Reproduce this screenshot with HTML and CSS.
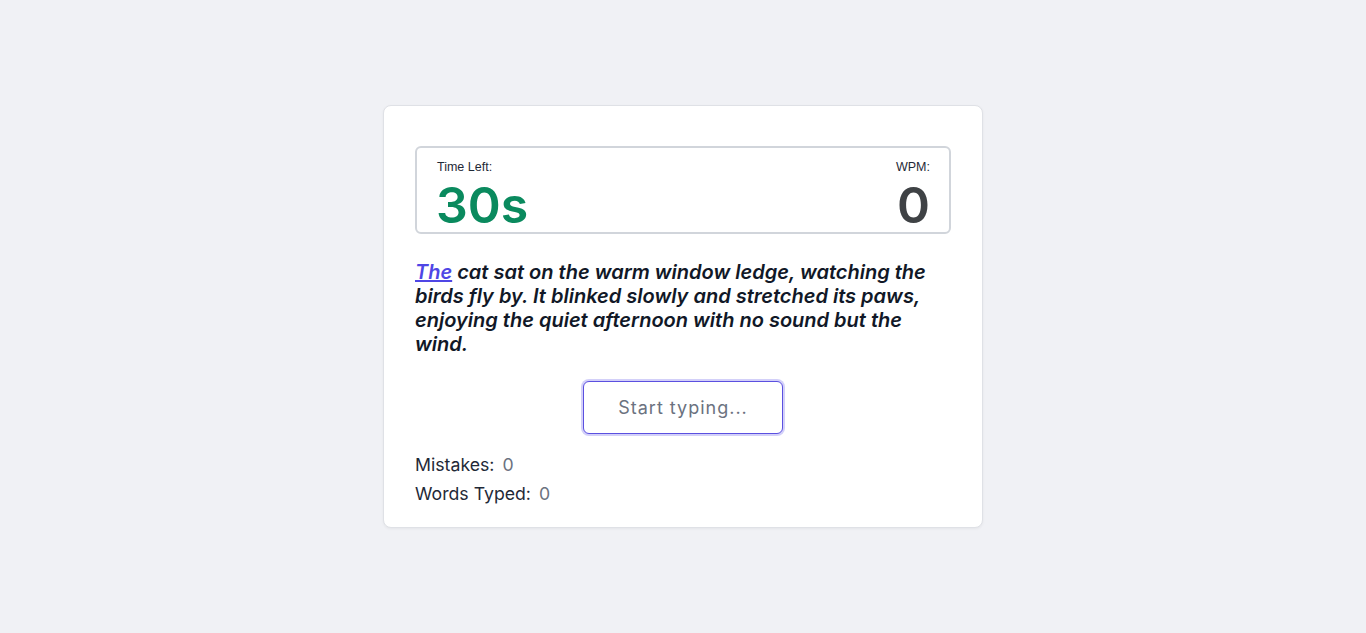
FILE: index.html
```html
<!DOCTYPE html>
<html>
<head>
<meta charset="utf-8">
<link rel="stylesheet" href="styles.css">
</head>
<body>
<main class="page">
  <section class="card">
    <div class="stats">
      <div class="stat">
        <div class="stat-label">Time Left:</div>
        <div class="stat-value time">30s</div>
      </div>
      <div class="stat stat-right">
        <div class="stat-label">WPM:</div>
        <div class="stat-value wpm">0</div>
      </div>
    </div>
    <p class="passage"><span class="current">The</span> cat sat on the warm window ledge, watching the birds fly by. It blinked slowly and stretched its paws, enjoying the quiet afternoon with no sound but the wind.</p>
    <div class="input-row">
      <input class="typing" type="text" placeholder="Start typing..." autofocus>
    </div>
    <div class="results">
      <div class="result"><span class="result-label">Mistakes:</span> <span class="result-value">0</span></div>
      <div class="result"><span class="result-label">Words Typed:</span> <span class="result-value">0</span></div>
    </div>
  </section>
</main>
</body>
</html>
```

FILE: styles.css
```css
html, body {
  margin: 0;
  padding: 0;
}
body {
  background: #f0f1f5;
  font-family: Inter, "Noto Sans", sans-serif;
  color: #1f2937;
}
.page {
  min-height: 633px;
  display: flex;
  align-items: center;
  justify-content: center;
}
.card {
  width: 536px;
  padding: 40px 31px 21px 31px;
  background: #ffffff;
  border: 1px solid #dfe1e6;
  border-radius: 8px;
  box-shadow: 0 1px 3px rgba(0,0,0,0.05);
}
.stats {
  box-sizing: border-box;
  display: flex;
  justify-content: space-between;
  border: 2px solid #d1d5db;
  border-radius: 6px;
  padding: 12px 19px 0 20px;
  height: 88px;
}
.stat {
  display: flex;
  flex-direction: column;
}
.stat-right {
  align-items: flex-end;
}
.stat-label {
  font-family: "Liberation Sans", Arial, sans-serif;
  font-size: 12.5px;
  line-height: 14px;
  color: #1f2937;
}
.stat-value {
  font-family: Inter, sans-serif;
  font-weight: 600;
  font-size: 50px;
  line-height: 56px;
  margin-top: 3px;
}
.time {
  color: #0a8a5e;
  margin-left: -1px;
}
.wpm {
  color: #3f4245;
}
.passage {
  margin: 26px 0 0 0;
  font-size: 20px;
  line-height: 24px;
  font-style: italic;
  font-weight: 600;
  color: #111827;
}
.current {
  color: #4f46e5;
  text-decoration: underline;
}
.input-row {
  display: flex;
  justify-content: center;
  margin-top: 25px;
}
.typing {
  box-sizing: border-box;
  width: 200px;
  height: 53px;
  border: 1px solid #5b50e0;
  border-radius: 6px;
  box-shadow: 0 0 0 2px #d3d0f9;
  outline: none;
  text-align: center;
  font-family: Inter, sans-serif;
  font-size: 18px;
  letter-spacing: 1px;
  color: #374151;
  background: #fff;
}
.typing::placeholder {
  color: #6b7280;
}
.results {
  margin-top: 19px;
  display: flex;
  flex-direction: column;
  gap: 5px;
}
.result {
  font-size: 17.7px;
  line-height: 24px;
  color: #1f2937;
}
.result-label {
  margin-right: 3px;
}
.result-value {
  color: #6b7280;
}
```
